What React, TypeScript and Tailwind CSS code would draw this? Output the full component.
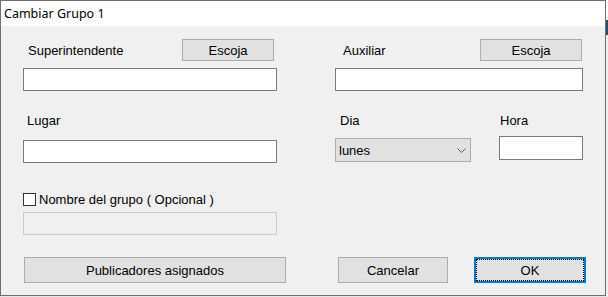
import React from 'react'

const FONT = { fontFamily: '"Liberation Sans", Arial, sans-serif' }

function Btn({ w, h, children, cls = '' }: { w: string; h: string; children: React.ReactNode; cls?: string }) {
  return (
    <div className={`${w} ${h} flex items-center justify-center border border-[#adadad] bg-[#e1e1e1] text-[13px] leading-[15px] text-black ${cls}`}>
      {children}
    </div>
  )
}

function TextBox({ w, h, cls = '' }: { w: string; h: string; cls?: string }) {
  return <div className={`${w} ${h} border border-[#7a7a7a] bg-white ${cls}`} />
}

export default function App() {
  return (
    <div className="flex flex-col w-[608px] h-[297px] bg-[#f0f0f0] overflow-hidden" style={FONT}>
      <div className="flex">
        {/* dialog window */}
        <div className="w-[606px] h-[296px] border border-[#6e6e6e] flex flex-col bg-[#f0f0f0]">
          {/* title bar */}
          <div className="h-[25px] bg-white flex items-center pl-[3px]">
            <span className="text-[12.5px] leading-[16px] text-black" style={{ fontFamily: '"Noto Sans", "Open Sans", sans-serif' }}>
              Cambiar Grupo 1
            </span>
          </div>

          {/* Superintendente / Auxiliar */}
          <div className="flex items-center mt-[13px] h-[22px]">
            <span className="ml-[27px] w-[154px] text-[13px] leading-[15px]">Superintendente</span>
            <Btn w="w-[92px]" h="h-[22px]">Escoja</Btn>
            <span className="ml-[69px] w-[137px] text-[13px] leading-[15px]">Auxiliar</span>
            <Btn w="w-[102px]" h="h-[22px]">Escoja</Btn>
          </div>
          <div className="flex mt-[7px]">
            <TextBox w="w-[254px] ml-[22px]" h="h-[23px]" />
            <TextBox w="w-[248px] ml-[58px]" h="h-[23px]" />
          </div>

          {/* Lugar / Dia / Hora */}
          <div className="flex items-start mt-[22px]">
            <div className="flex flex-col ml-[22px] w-[254px]">
              <span className="pl-[4px] text-[13px] leading-[15px]">Lugar</span>
              <TextBox w="w-[254px] mt-[12px]" h="h-[23px]" />
            </div>
            <div className="flex flex-col ml-[58px] w-[136px]">
              <span className="pl-[5px] text-[13px] leading-[15px]">Dia</span>
              <div className="mt-[10px] h-[24px] w-[136px] border border-[#adadad] bg-[#e1e1e1] flex items-center justify-between pl-[3px] pr-[4px]">
                <span className="text-[13px] leading-[15px]">lunes</span>
                <svg width="9" height="5" viewBox="0 0 9 5" className="mt-[1px]">
                  <path d="M0.5 0.5 L4.5 4.5 L8.5 0.5" fill="none" stroke="#5a5a5a" strokeWidth="1" />
                </svg>
              </div>
            </div>
            <div className="flex flex-col ml-[28px] w-[84px]">
              <span className="pl-[1px] text-[13px] leading-[15px]">Hora</span>
              <TextBox w="w-[84px] mt-[8px]" h="h-[24px]" />
            </div>
          </div>

          {/* Nombre del grupo */}
          <div className="flex items-center mt-[30px] ml-[22px] h-[13px]">
            <div className="w-[13px] h-[13px] border border-[#333333] bg-white" />
            <span className="ml-[3px] text-[13px] leading-[15px]">Nombre del grupo ( Opcional )</span>
          </div>
          <div className="ml-[22px] mt-[6px] w-[254px] h-[23px] border border-[#cccccc] bg-[#f0f0f0]" />

          {/* bottom buttons */}
          <div className="flex mt-[22px]">
            <Btn w="w-[262px] ml-[23px]" h="h-[26px]">Publicadores asignados</Btn>
            <Btn w="w-[110px] ml-[52px]" h="h-[26px]">Cancelar</Btn>
            <div className="ml-[26px] w-[112px] h-[26px] border-2 border-[#0078d7] bg-[#e1e1e1]">
              <div className="w-full h-full border border-dotted border-black flex items-center justify-center text-[13px] leading-[15px]">
                OK
              </div>
            </div>
          </div>
        </div>

        {/* what shows past the right edge */}
        <div className="flex flex-col w-[2px]">
          <div className="h-[20px] bg-white" />
          <div className="h-[15px] bg-[#1f4e79]" />
          <div className="flex-1 bg-[#f0f0f0]" />
        </div>
      </div>
      <div className="h-[1px] bg-[#e8e8e8]" />
    </div>
  )
}
